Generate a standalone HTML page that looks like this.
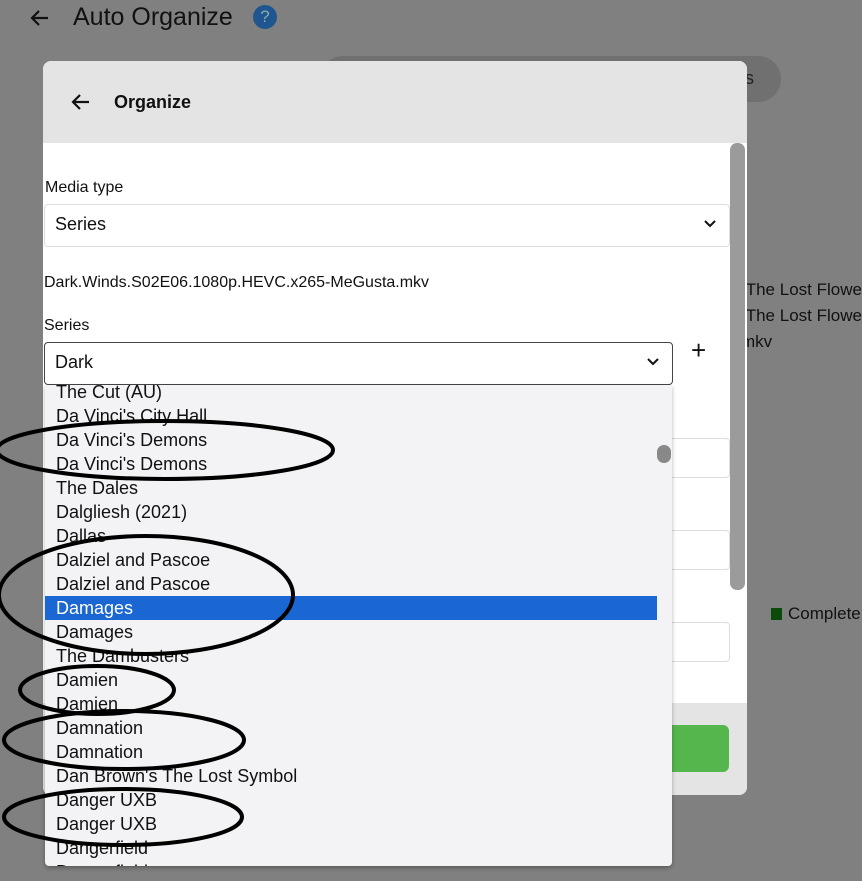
<!DOCTYPE html>
<html><head><style>
*{margin:0;padding:0;box-sizing:border-box}
body{width:862px;height:881px;background:#808080;font-family:"Liberation Sans",sans-serif;position:relative;overflow:hidden;color:#111}
.a{position:absolute}
.item{height:24px;line-height:24px;padding-left:11px;font-size:18px;color:#111;white-space:nowrap}
.fld{position:absolute;border:1px solid #ddd;border-radius:4px;background:#fff}
</style></head><body>
<svg class="a" style="left:28px;top:6px" width="24" height="24" viewBox="0 0 24 24"><path d="M20 12H5M11 5l-7 7 7 7" stroke="#111" stroke-width="2.2" fill="none"/></svg>
<div class="a" style="left:73px;top:3px;font-size:25px;color:#111">Auto Organize</div>
<div class="a" style="left:253px;top:5px;width:24px;height:24px;border-radius:50%;background:#1f5690;color:#8aa;font-size:17px;text-align:center;line-height:24px">?</div>
<div class="a" style="left:320px;top:56px;width:461px;height:46px;border-radius:23px;background:#707070"></div>
<div class="a" style="left:745px;top:68px;font-size:18px;color:#222">s</div>
<div class="a" style="left:741px;top:277px;font-size:17px;color:#111;line-height:26px">/The Lost Flowe<br>/The Lost Flowe<br>mkv</div>
<div class="a" style="left:771px;top:608px;width:11px;height:12px;background:#0b4a0b"></div>
<div class="a" style="left:788px;top:604px;font-size:17px;color:#111">Complete</div>

<div class="a" style="left:43px;top:61px;width:704px;height:734px;background:#fff;border-radius:8px;overflow:hidden">
 <div class="a" style="left:0;top:0;width:704px;height:82px;background:#e4e4e4"></div>
 <svg class="a" style="left:26px;top:29px" width="24" height="24" viewBox="0 0 24 24"><path d="M20 12H5M11 5l-7 7 7 7" stroke="#111" stroke-width="2.2" fill="none"/></svg>
 <div class="a" style="left:71px;top:31px;font-size:18px;font-weight:bold">Organize</div>
 <div class="a" style="left:687px;top:82px;width:15px;height:447px;background:#9b9b9b;border-radius:7px"></div>
 <div class="a" style="left:0;top:642px;width:704px;height:92px;background:#e4e4e4"></div>
 <div class="a" style="left:610px;top:664px;width:76px;height:47px;background:#54b64c;border-radius:6px"></div>
 <div class="a" style="left:2px;top:118px;font-size:16px">Media type</div>
 <div class="fld" style="left:1px;top:143px;width:686px;height:43px"></div>
 <div class="a" style="left:12px;top:153px;font-size:18px">Series</div>
 <svg class="a" style="left:659px;top:155px" width="16" height="16"><path d="M3 5l5 5 5-5" stroke="#111" stroke-width="2" fill="none"/></svg>
 <div class="a" style="left:1px;top:213px;font-size:16px">Dark.Winds.S02E06.1080p.HEVC.x265-MeGusta.mkv</div>
 <div class="a" style="left:1px;top:256px;font-size:16px">Series</div>
 <div class="a" style="left:1px;top:281px;width:629px;height:43px;border:1px solid #444;border-radius:4px"></div>
 <div class="a" style="left:12px;top:291px;font-size:18px">Dark</div>
 <svg class="a" style="left:602px;top:293px" width="16" height="16"><path d="M3 5l5 5 5-5" stroke="#111" stroke-width="2" fill="none"/></svg>
 <div class="a" style="left:648px;top:274px;font-size:26px">+</div>
 <div class="fld" style="left:600px;top:377px;width:87px;height:40px"></div>
 <div class="fld" style="left:600px;top:469px;width:87px;height:40px"></div>
 <div class="fld" style="left:600px;top:561px;width:87px;height:40px"></div>
</div>

<div class="a" style="left:45px;top:385px;width:627px;height:481px;background:#f3f3f6;border-radius:0 0 4px 4px;overflow:hidden;box-shadow:0 2px 4px rgba(0,0,0,.3)">
 <div class="a" style="left:0;top:-5px;width:612px">
  <div class="item">The Cut (AU)</div><div class="item">Da Vinci's City Hall</div><div class="item">Da Vinci's Demons</div><div class="item">Da Vinci's Demons</div><div class="item">The Dales</div><div class="item">Dalgliesh (2021)</div><div class="item">Dallas</div><div class="item">Dalziel and Pascoe</div><div class="item">Dalziel and Pascoe</div><div class="item" style="background:#1a66d2;color:#fff">Damages</div><div class="item">Damages</div><div class="item">The Dambusters</div><div class="item">Damien</div><div class="item">Damien</div><div class="item">Damnation</div><div class="item">Damnation</div><div class="item">Dan Brown's The Lost Symbol</div><div class="item">Danger UXB</div><div class="item">Danger UXB</div><div class="item">Dangerfield</div><div class="item">Dangerfield</div>
 </div>
 <div class="a" style="left:612px;top:60px;width:14px;height:18px;background:#888;border-radius:7px"></div>
</div>

<svg class="a" style="left:0;top:0" width="862" height="881">
<g fill="none" stroke="#000" stroke-width="4">
<ellipse cx="165" cy="450" rx="168" ry="29"/>
<ellipse cx="146" cy="595" rx="147" ry="59"/>
<ellipse cx="97" cy="690" rx="77" ry="24"/>
<ellipse cx="124" cy="740" rx="120" ry="29"/>
<ellipse cx="123" cy="817" rx="119" ry="28"/>
</g></svg>
</body></html>
